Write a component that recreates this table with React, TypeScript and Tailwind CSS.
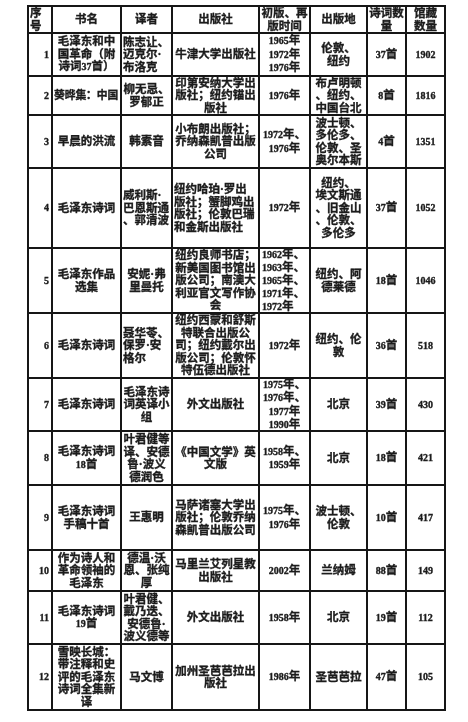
import clsx from 'clsx';

type CellDef = { lines: string[]; cls?: string };

const header: CellDef[] = [
  { lines: ['序', '号'], cls: 'items-start justify-start pl-[1px]' },
  { lines: ['书名'] },
  { lines: ['译者'] },
  { lines: ['出版社'] },
  { lines: ['初版、再', '版时间'] },
  { lines: ['出版地'] },
  { lines: ['诗词数', '量'] },
  { lines: ['馆藏', '数量'] },
];

const num = 'items-end pr-[2px]';

const rows: CellDef[][] = [
  [
    { lines: ['1'], cls: num },
    { lines: ['毛泽东和中', '国革命（附', '诗词37首）'] },
    { lines: ['陈志让、', '迈克尔·', '布洛克'], cls: 'items-start' },
    { lines: ['牛津大学出版社'] },
    { lines: ['1965年', '1972年', '1976年'] },
    { lines: ['伦敦、', '纽约'], cls: 'justify-around py-[3px]' },
    { lines: ['37首'] },
    { lines: ['1902'] },
  ],
  [
    { lines: ['2'], cls: num },
    { lines: ['葵晔集：中国'], cls: 'items-start px-0 text-[10.8px] tracking-[-0.1px]' },
    { lines: ['柳无忌、', '罗郁正'] },
    { lines: ['印第安纳大学出', '版社；纽约锚出', '版社'] },
    { lines: ['1976年'] },
    { lines: ['布卢明顿', '、纽约、', '中国台北'] },
    { lines: ['8首'] },
    { lines: ['1816'] },
  ],
  [
    { lines: ['3'], cls: num },
    { lines: ['早晨的洪流'] },
    { lines: ['韩素音'] },
    { lines: ['小布朗出版社；', '乔纳森凯普出版', '公司'] },
    { lines: ['1972年、', '1976年'] },
    { lines: ['波士顿、', '多伦多、', '伦敦、圣', '奥尔本斯'] },
    { lines: ['4首'] },
    { lines: ['1351'] },
  ],
  [
    { lines: ['4'], cls: num },
    { lines: ['毛泽东诗词'] },
    { lines: ['威利斯·', '巴恩斯通', '、郭清波'], cls: 'items-start' },
    { lines: ['纽约哈珀·罗出', '版社；蟹脚鸡出', '版社；伦敦巴瑞', '和金斯出版社'], cls: 'items-start' },
    { lines: ['1972年'] },
    { lines: ['纽约、', '埃文斯通', '、旧金山', '、伦敦、', '多伦多'] },
    { lines: ['37首'] },
    { lines: ['1052'] },
  ],
  [
    { lines: ['5'], cls: num },
    { lines: ['毛泽东作品', '选集'] },
    { lines: ['安妮·弗', '里曼托'] },
    { lines: ['纽约良师书店；', '新美国图书馆出', '版公司；南澳大', '利亚官文写作协', '会'] },
    { lines: ['1962年、', '1963年、', '1965年、', '1971年、', '1972年'], cls: 'items-start pl-[2px] leading-[12px]' },
    { lines: ['纽约、阿', '德莱德'] },
    { lines: ['18首'] },
    { lines: ['1046'] },
  ],
  [
    { lines: ['6'], cls: num },
    { lines: ['毛泽东诗词'] },
    { lines: ['聂华苓、', '保罗·安', '格尔'], cls: 'items-start' },
    { lines: ['纽约西蒙和舒斯', '特联合出版公', '司；纽约戴尔出', '版公司；伦敦怀', '特伍德出版社'] },
    { lines: ['1972年'] },
    { lines: ['纽约、伦', '敦'] },
    { lines: ['36首'] },
    { lines: ['518'] },
  ],
  [
    { lines: ['7'], cls: num },
    { lines: ['毛泽东诗词'] },
    { lines: ['毛泽东诗', '词英译小', '组'] },
    { lines: ['外文出版社'] },
    { lines: ['1975年、', '1976年、', '1977年', '1990年'] },
    { lines: ['北京'] },
    { lines: ['39首'] },
    { lines: ['430'] },
  ],
  [
    { lines: ['8'], cls: num },
    { lines: ['毛泽东诗词', '18首'] },
    { lines: ['叶君健等', '译、安德', '鲁·波义', '德润色'] },
    { lines: ['《中国文学》英', '文版'] },
    { lines: ['1958年、', '1959年'] },
    { lines: ['北京'] },
    { lines: ['18首'] },
    { lines: ['421'] },
  ],
  [
    { lines: ['9'], cls: num },
    { lines: ['毛泽东诗词', '手稿十首'] },
    { lines: ['王惠明'] },
    { lines: ['马萨诸塞大学出', '版社；伦敦乔纳', '森凯普出版公司'] },
    { lines: ['1975年、', '1976年'] },
    { lines: ['波士顿、', '伦敦'], cls: 'justify-between py-[3px]' },
    { lines: ['10首'] },
    { lines: ['417'] },
  ],
  [
    { lines: ['10'], cls: num },
    { lines: ['作为诗人和', '革命领袖的', '毛泽东'] },
    { lines: ['德温·沃', '恩、张纯', '厚'] },
    { lines: ['马里兰艾列星教', '出版社'] },
    { lines: ['2002年'] },
    { lines: ['兰纳姆'] },
    { lines: ['88首'] },
    { lines: ['149'] },
  ],
  [
    { lines: ['11'], cls: num },
    { lines: ['毛泽东诗词', '19首'] },
    { lines: ['叶君健、', '戴乃迭、', '安德鲁·', '波义德等'] },
    { lines: ['外文出版社'] },
    { lines: ['1958年'] },
    { lines: ['北京'] },
    { lines: ['19首'] },
    { lines: ['112'] },
  ],
  [
    { lines: ['12'], cls: num },
    { lines: ['雪映长城：', '带注释和史', '评的毛泽东', '诗词全集新', '译'] },
    { lines: ['马文博'] },
    { lines: ['加州圣芭芭拉出', '版社'] },
    { lines: ['1986年'] },
    { lines: ['圣芭芭拉'] },
    { lines: ['47首'] },
    { lines: ['105'] },
  ],
];

// digits in the scan are narrow half-width glyphs
function Text({ value }: { value: string }) {
  const parts = value.split(/(\d+)/);
  return (
    <>
      {parts.map((p, i) =>
        /^\d+$/.test(p) ? (
          <span key={i} className="text-[10px]">
            {p}
          </span>
        ) : (
          <span key={i}>{p}</span>
        ),
      )}
    </>
  );
}

function Cell({ lines, cls }: CellDef) {
  return (
    <div
      className={clsx(
        'flex min-w-0 flex-col items-center justify-center overflow-hidden bg-white px-[1px] text-center',
        cls,
      )}
    >
      {lines.map((line, i) => (
        <span key={i} className="whitespace-nowrap">
          <Text value={line} />
        </span>
      ))}
    </div>
  );
}

export default function App() {
  return (
    <div className="min-h-[722px] w-[468px] bg-white pt-[5px] pl-[27px]">
      <div
        className="grid w-[419px] grid-cols-[22px_67px_49px_85px_49px_55px_37px_37px] grid-rows-[25px_41px_37px_51px_78px_63px_63px_51px_52px_63px_39px_51px_64px] gap-[2px] bg-[#161616] p-[2px] text-[11.5px] leading-[12.5px] font-bold text-[#1c1c1c] blur-[0.3px] [-webkit-text-stroke:0.35px_#1c1c1c]"
        style={{ fontFamily: '"Liberation Serif", "Noto Sans CJK SC", serif' }}
      >
        {header.map((c, i) => (
          <Cell key={`h${i}`} {...c} />
        ))}
        {rows.map((row, r) => row.map((c, i) => <Cell key={`${r}-${i}`} {...c} />))}
      </div>
    </div>
  );
}
